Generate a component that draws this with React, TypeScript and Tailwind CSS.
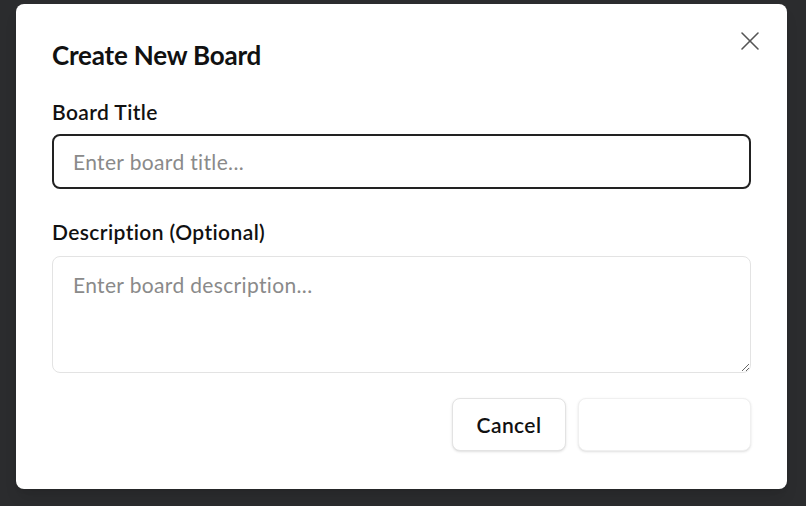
import { X } from 'lucide-react'

export default function App() {
  return (
    <div className="min-h-[506px] w-full bg-[#2b2c2e] pl-4 pr-[19px] pt-1 pb-4 font-['Lato','Noto_Sans',sans-serif]">
      <div className="relative w-[771px] rounded-lg bg-white px-9 pt-[33px] pb-[38px] shadow-lg">
        <button className="absolute right-[17px] top-[17px] p-1 text-[#555]">
          <X className="h-8 w-8" strokeWidth={1.2} />
        </button>
        <h2 className="h-9 text-[26px] leading-9 font-bold tracking-[-0.2px] text-[#111]">Create New Board</h2>

        <label className="mt-[25px] block text-[21px] leading-7 font-semibold tracking-[0.4px] text-[#111]">Board Title</label>
        <input
          type="text"
          placeholder="Enter board title..."
          className="mt-2 block h-[55px] w-full rounded-lg border-2 border-[#222] px-[19px] text-[21px] tracking-[0.35px] text-[#111] placeholder:text-[#8a8a8a] outline-none"
        />

        <label className="mt-[29px] block text-[21px] leading-7 font-semibold tracking-[0.4px] text-[#111]">Description (Optional)</label>
        <textarea
          placeholder="Enter board description..."
          className="mt-[10px] block h-[117px] w-full rounded-lg border border-[#e3e3e3] px-5 py-[14px] text-[21px] leading-7 tracking-[0.35px] text-[#111] placeholder:text-[#8a8a8a] outline-none"
        />

        <div className="mt-[25px] flex justify-end gap-3">
          <button className="h-[53px] w-[114px] rounded-lg border border-[#e3e3e3] bg-white text-[21px] font-semibold tracking-[0.4px] text-[#111] shadow-sm">
            Cancel
          </button>
          <button className="h-[53px] w-[173px] rounded-lg border border-[#f0f0f0] bg-white text-[21px] font-semibold text-white shadow-sm">
            Create Board
          </button>
        </div>
      </div>
    </div>
  )
}
